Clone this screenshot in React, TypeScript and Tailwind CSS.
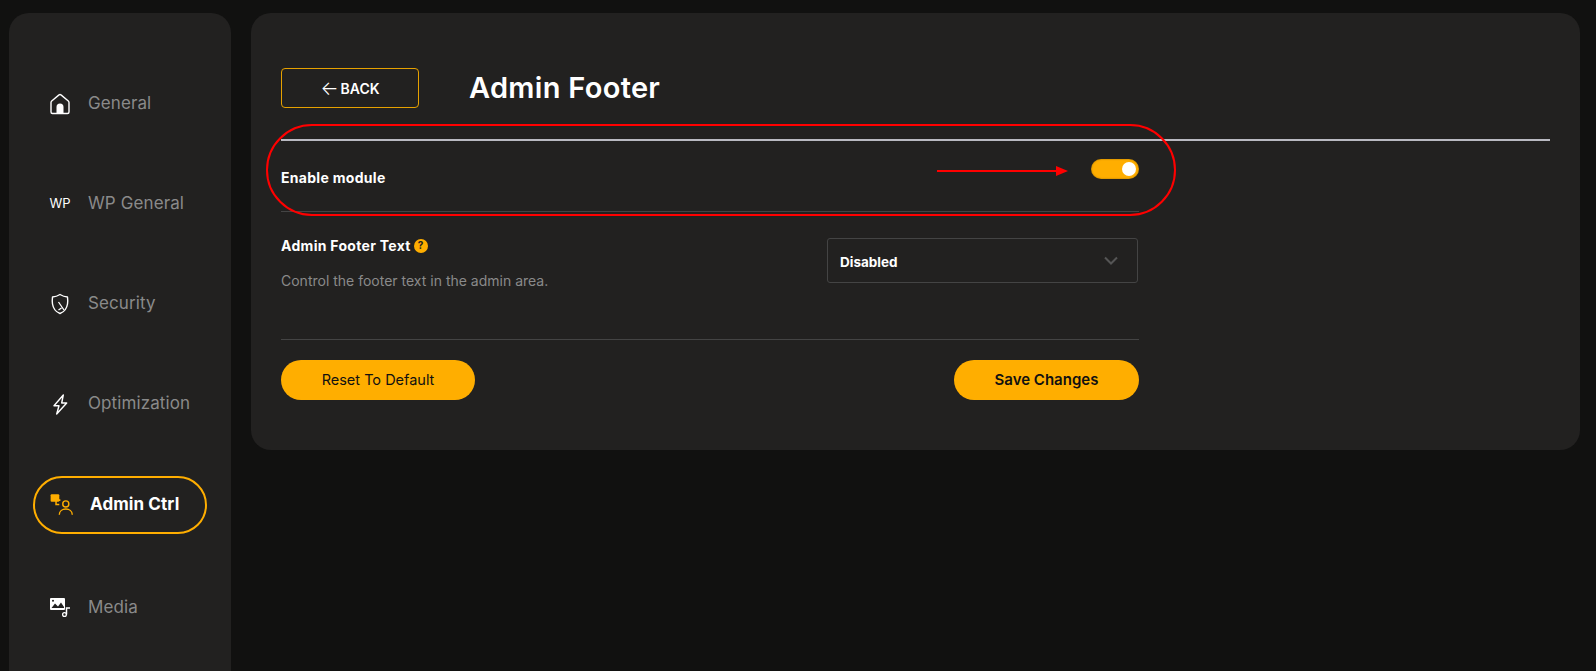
const font = { fontFamily: "Inter" };

function HomeIcon() {
  return (
    <svg width="22" height="22" viewBox="0 0 22 22" fill="none">
      <path d="M2 9.500c0-.6.2-1.100.7-1.500L10 1.900a1.500 1.500 0 0 1 2 0L19.300 8c.5.400.7.900.7 1.500V19a1.500 1.500 0 0 1-1.500 1.500h-15A1.500 1.500 0 0 1 2 19Z" stroke="#fff" strokeWidth="1.400" strokeLinejoin="round" />
      <path d="M7.500 20.500V14a3.500 3.500 0 0 1 7 0v6.500Z" fill="#fff" />
    </svg>
  );
}

function ShieldIcon() {
  return (
    <svg width="22" height="22" viewBox="0 0 22 22" fill="none">
      <path d="M11 1.500c2.500 1.500 5 2.300 7.500 2.500.3 2.500.3 5 0 7-.7 4.500-3.500 8-7.500 9.500-4-1.500-6.800-5-7.500-9.500-.3-2-.3-4.500 0-7 2.500-.2 5-1 7.500-2.500Z" stroke="#fff" strokeWidth="1.400" strokeLinejoin="round" />
      <path d="M9.500 9 15 17M9.500 17l3-2" stroke="#fff" strokeWidth="1.300" />
    </svg>
  );
}

function BoltIcon() {
  return (
    <svg width="22" height="22" viewBox="0 0 22 22" fill="none">
      <path d="M14.300 2 5 12.700h5L7.700 21l10-11h-5Z" stroke="#fff" strokeWidth="1.400" strokeLinejoin="round" />
    </svg>
  );
}

function AdminIcon() {
  return (
    <svg className="shrink-0" width="26" height="26" viewBox="0 0 24 24" fill="none">
      <rect x="1.500" y="2" width="8" height="7" rx="1" fill="#ffae00" />
      <path d="M6.500 7.500h4M6.500 7.500v4h3" stroke="#ffae00" strokeWidth="1.400" />
      <circle cx="15.500" cy="11" r="2.800" stroke="#ffae00" strokeWidth="1.300" />
      <path d="M9.500 21c0-7 12-7 12 0" stroke="#ffae00" strokeWidth="1.300" />
    </svg>
  );
}

function MediaIcon() {
  return (
    <svg width="22" height="22" viewBox="0 0 22 22" fill="none">
      <rect x="1" y="1" width="15" height="12" rx="1" fill="#fff" />
      <path d="M2.500 11 6 6.500l3 3 3-4 3 4.500v1H2.500Z" fill="#222120" />
      <circle cx="4" cy="3.800" r="1" fill="#222120" />
      <path d="M17.500 17.500V11H21" stroke="#fff" strokeWidth="1.500" />
      <circle cx="15.500" cy="17.500" r="1.900" stroke="#fff" strokeWidth="1.300" />
    </svg>
  );
}

const navItems = [
  { label: "General", icon: <HomeIcon /> },
  { label: "WP General", icon: <span className="text-[13px] font-normal text-white">WP</span> },
  { label: "Security", icon: <ShieldIcon /> },
  { label: "Optimization", icon: <BoltIcon /> },
  { label: "Admin Ctrl", icon: <AdminIcon />, active: true },
  { label: "Media", icon: <MediaIcon /> },
];

export default function App() {
  return (
    <div className="flex h-screen gap-5 overflow-hidden bg-[#111110] pt-[13px] pr-4 pl-[9px]" style={font}>
      <aside className="flex h-[800px] w-[222px] shrink-0 flex-col items-center gap-[43px] rounded-[20px] bg-[#222120] pt-[62px]">
        {navItems.map((item) => (
          <div
            key={item.label}
            className={
              item.active
                ? "mt-px mb-[2px] flex h-[58px] w-[174px] items-center gap-[17px] rounded-full border-2 border-[#ffae00] pl-[16px]"
                : "flex h-[57px] w-[174px] items-center gap-[17px] pl-[16px]"
            }
          >
            <span className="flex w-[22px] justify-center">{item.icon}</span>
            <span
              className={
                item.active
                  ? "text-[17px] font-bold tracking-[0.1px] text-white"
                  : "text-[17px] font-normal tracking-[0.1px] text-[#8a8a8a]"
              }
            >
              {item.label}
            </span>
          </div>
        ))}
      </aside>

      <main className="relative h-[437px] flex-1 rounded-[20px] bg-[#222120] pt-[55px] pr-[30px] pl-[30px]">
        <div className="flex h-10 items-center gap-[50px]">
          <button className="flex h-10 w-[138px] items-center justify-center gap-[2px] rounded-[4px] border border-[#e6a100] text-[14px] font-semibold text-white">
            <span className="text-[19px] leading-none font-light">←</span>
            BACK
          </button>
          <h1 className="text-[29px] leading-10 font-semibold tracking-[0.3px] text-white">Admin Footer</h1>
        </div>

        <div className="mt-[31px] h-[2px] bg-[#b9b9c1]" />

        <div className="w-[858px]">
          <div className="flex h-[71px] items-center justify-between border-b border-[#444] pt-[2px]">
            <span className="text-[14px] font-bold tracking-[0.3px] text-white">Enable module</span>
            <span className="-mt-[17px] flex h-5 w-12 items-center justify-end rounded-full bg-[#ffae00] pr-[3px] shadow-[inset_0_0_2px_rgba(0,0,0,0.4)]">
              <span className="h-[14px] w-[14px] rounded-full bg-white" />
            </span>
          </div>

          <div className="flex h-[128px] items-start justify-between border-b border-[#444] pt-[23px] pr-px">
            <div>
              <div className="flex items-center gap-[3px] text-[14px] font-bold tracking-[0.3px] text-white">
                Admin Footer Text
                <span className="flex h-[14px] w-[14px] items-center justify-center rounded-full bg-[#ffae00] text-[10px] font-bold text-[#222120]">?</span>
              </div>
              <p className="mt-[14px] text-[14px] text-[#8a8a8a]">Control the footer text in the admin area.</p>
            </div>
            <div className="mt-[3px] flex h-[45px] w-[311px] items-center justify-between rounded-[3px] border border-[#444] pr-[19px] pl-3">
              <span className="mt-[3px] text-[13.5px] font-bold text-white">Disabled</span>
              <svg width="14" height="9" viewBox="0 0 14 9" fill="none">
                <path d="M1 1.500 7 7.500l6-6" stroke="#555" strokeWidth="2" />
              </svg>
            </div>
          </div>

          <div className="mt-5 flex items-center justify-between">
            <button className="h-10 w-[194px] rounded-full bg-[#ffae00] text-[14.5px] text-[#111]">Reset To Default</button>
            <button className="h-10 w-[185px] rounded-full bg-[#ffae00] text-[15px] font-semibold text-[#111]">Save Changes</button>
          </div>
        </div>

        {/* red annotation drawn on top of the screenshot */}
        <div className="pointer-events-none absolute top-[111px] left-[15px] h-[92px] w-[910px] rounded-[46px] border-2 border-[#ff0000]" />
        <svg className="pointer-events-none absolute top-[150px] left-[686px]" width="132" height="16" viewBox="0 0 132 16">
          <path d="M0 8h120" stroke="#ff0000" strokeWidth="2" />
          <path d="M119 3l12 5-12 5Z" fill="#ff0000" />
        </svg>
      </main>
    </div>
  );
}
